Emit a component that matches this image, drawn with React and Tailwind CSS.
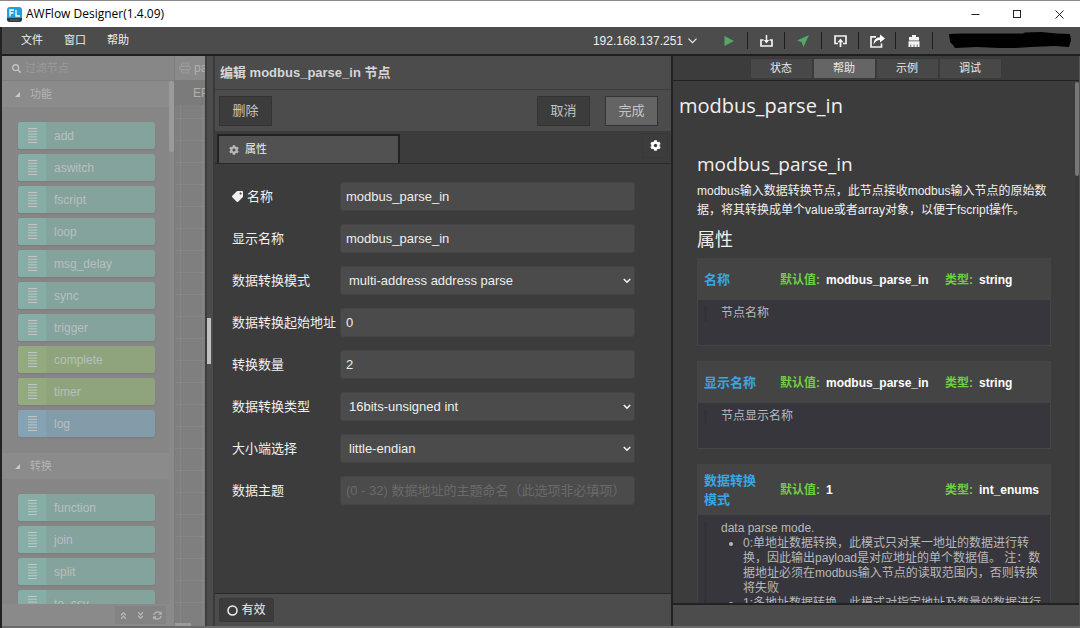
import React, { useState } from "react";
import { FaSearch, FaCog, FaTag, FaAngleDoubleUp, FaAngleDoubleDown, FaSyncAlt } from "react-icons/fa";

const NODE_COLORS = {
  teal: { body: "bg-[#84a39d]", icon: "bg-[#87ada7]" },
  green: { body: "bg-[#8fa37d]", icon: "bg-[#93aa7f]" },
  blue: { body: "bg-[#839caa]", icon: "bg-[#85a3b5]" },
};

const PALETTE = [
  {
    title: "功能",
    nodes: [
      ["add", "teal"],
      ["aswitch", "teal"],
      ["fscript", "teal"],
      ["loop", "teal"],
      ["msg_delay", "teal"],
      ["sync", "teal"],
      ["trigger", "teal"],
      ["complete", "green"],
      ["timer", "green"],
      ["log", "blue"],
    ],
  },
  {
    title: "转换",
    nodes: [
      ["function", "teal"],
      ["join", "teal"],
      ["split", "teal"],
      ["to_csv", "teal"],
    ],
  },
];

const FIELDS = [
  { id: "name", label: "名称", value: "modbus_parse_in", tag: true },
  { id: "display", label: "显示名称", value: "modbus_parse_in" },
  { id: "mode", label: "数据转换模式", options: ["multi-address address parse", "single-address parse"] },
  { id: "start", label: "数据转换起始地址", value: "0" },
  { id: "count", label: "转换数量", value: "2" },
  { id: "type", label: "数据转换类型", options: ["16bits-unsigned int", "16bits-int"] },
  { id: "endian", label: "大小端选择", options: ["little-endian", "big-endian"] },
  { id: "topic", label: "数据主题", value: "", placeholder: "(0 - 32) 数据地址的主题命名（此选项非必填项）" },
];

function TitleBar() {
  return (
    <header className="flex h-[27px] shrink-0 items-center border-t border-[#8a8a8a] bg-white pl-[7px] text-black">
      <svg width="15" height="15" viewBox="0 0 15 15" aria-hidden="true">
        <rect width="15" height="15" rx="3" fill="#1d9fe0" />
        <path d="M0 11h15v1a3 3 0 0 1-3 3H3a3 3 0 0 1-3-3z" fill="#2b3a44" />
        <path d="M3 9.500V3h4M3 6h3.500M9 3v6h4" fill="none" stroke="#fff" strokeWidth="1.300" />
        <path d="M3 13h9" stroke="#6d7f8a" strokeWidth="0.800" />
      </svg>
      <h1 className="ml-1 flex-1 font-['Open_Sans','Noto_Sans',sans-serif] text-[12px] leading-4">AWFlow Designer(1.4.09)</h1>
      <button aria-label="Minimize" className="flex w-[42px] justify-center">
        <svg width="9" height="9" viewBox="0 0 9 9"><path d="M0.500 4.500h8" stroke="#222" /></svg>
      </button>
      <button aria-label="Maximize" className="flex w-[42px] justify-center">
        <svg width="9" height="9" viewBox="0 0 9 9"><rect x="0.500" y="0.500" width="7" height="7" fill="none" stroke="#222" /></svg>
      </button>
      <button aria-label="Close" className="flex w-[42px] justify-center">
        <svg width="9" height="9" viewBox="0 0 9 9"><path d="M0.500 0.500l8 8M8.500 0.500l-8 8" stroke="#222" /></svg>
      </button>
    </header>
  );
}

function ToolButton({ label, children }) {
  return (
    <button aria-label={label} className="flex h-[17px] w-[37px] items-center justify-center border-r border-[#1f1f1f]">
      {children}
    </button>
  );
}

function MenuBar() {
  return (
    <nav className="flex h-[29px] shrink-0 items-center border-b-2 border-[#1f1f1f] bg-[#4c4c4c] pl-[19px] pr-[9px] text-[11px] text-[#eee]">
      <div className="flex flex-1 gap-[21px]">
        <button>文件</button>
        <button>窗口</button>
        <button>帮助</button>
      </div>
      <button className="mr-[14px] flex items-center gap-[5px] text-[12px]">
        192.168.137.251
        <svg width="9" height="6" viewBox="0 0 9 6"><path d="M0.500 0.700l4 4 4-4" fill="none" stroke="#eee" strokeWidth="1.200" /></svg>
      </button>
      <ToolButton label="Run">
        <svg width="10" height="10" viewBox="0 0 10 10"><path d="M0.500 0L10 5L0.500 10z" fill="#54a868" /></svg>
      </ToolButton>
      <ToolButton label="Download">
        <svg width="13" height="12" viewBox="0 0 13 12">
          <path d="M3.500 5H1v6h11V5H9.500" fill="none" stroke="#f2f2f2" strokeWidth="1.700" />
          <path d="M6.500 0v6" stroke="#f2f2f2" strokeWidth="1.500" />
          <path d="M3.800 5h5.400L6.500 8.400z" fill="#f2f2f2" />
        </svg>
      </ToolButton>
      <ToolButton label="Deploy">
        <svg width="12" height="12" viewBox="0 0 12 12"><path d="M12 0L0 5.600l4.600 1.500L6.500 12z" fill="#54a868" /></svg>
      </ToolButton>
      <ToolButton label="Upload">
        <svg width="13" height="12" viewBox="0 0 13 12">
          <path d="M4 8.500H1V1h11v7.500H9" fill="none" stroke="#f2f2f2" strokeWidth="1.700" />
          <path d="M6.500 12V6" stroke="#f2f2f2" strokeWidth="1.800" />
          <path d="M3.500 7.200h6L6.500 3.600z" fill="#f2f2f2" />
        </svg>
      </ToolButton>
      <ToolButton label="Share">
        <svg width="15" height="14" viewBox="0 0 15 14">
          <path d="M6 2.800H1V13h10.500V9.500" fill="none" stroke="#f2f2f2" strokeWidth="1.700" />
          <path d="M3.600 10.500C3.600 6 6 3.300 10 3.200V0.600L15 4.600l-5 4V6C7.500 6 5.200 7.200 3.600 10.500z" fill="#fff" />
        </svg>
      </ToolButton>
      <ToolButton label="Clear">
        <svg width="12" height="12" viewBox="0 0 12 12">
          <path d="M4 0h4v2h3v3.500H1V2h3z" fill="#f2f2f2" />
          <path d="M0.500 6.300h11V12H9.600V9.500h-.8V12H6.400V9.500h-.8V12H3.200V9.500h-.8V12H0.500z" fill="#f2f2f2" />
        </svg>
      </ToolButton>
      <svg className="ml-4" width="122" height="17" viewBox="0 0 122 17" aria-hidden="true">
        <path d="M0 2L12 1.500L74 1.500L76 0.500L92 0L108 1.500L121 2L122 8L120 15L106 14L82 15L66 16L50 16L28 15L6 16L4 13L1 10z" fill="#000" />
      </svg>
    </nav>
  );
}

function PaletteNode({ name, tone }) {
  const c = NODE_COLORS[tone];
  return (
    <li className={"flex h-[27px] overflow-hidden rounded-[3px] shadow-[0_1px_2px_rgba(0,0,0,0.08)] " + c.body}>
      <span className={"flex w-7 items-center justify-center " + c.icon}>
        <svg width="9" height="15" viewBox="0 0 9 15" aria-hidden="true">
          <path d="M0 0.500h9M0 3.300h9M0 6.100h9M0 8.900h9M0 11.700h9M0 14.500h9" stroke="#bfc6c4" strokeWidth="1" />
        </svg>
      </span>
      <span className="flex items-center pl-2 text-[12px] leading-4 text-[#b8c0be]">{name}</span>
    </li>
  );
}

function Palette() {
  return (
    <aside className="flex w-[173px] shrink-0 flex-col border-r border-[#7c7c7c] bg-[#868686]">
      <label className="flex h-[25px] shrink-0 items-center gap-[4px] border-b border-[#7f7f7f] bg-[#878787] pl-[10px] text-[#c4c4c4]">
        <FaSearch size={9} />
        <input
          aria-label="过滤节点"
          placeholder="过滤节点"
          className="min-w-0 flex-1 bg-transparent text-[11px] outline-none placeholder:text-[#9a9a9a]"
        />
      </label>
      <div className="flex min-h-0 flex-1 overflow-hidden">
        <div className="min-w-0 flex-1">
          {PALETTE.map((group) => (
            <section key={group.title}>
              <h2 className="flex h-[26px] items-center gap-[10px] bg-[#8b8b8b] pl-[13px] text-[11px] text-[#b4b4b4]">
                <svg width="5" height="5" viewBox="0 0 5 5"><path d="M5 0v5H0z" fill="#c8c8c8" /></svg>
                {group.title}
              </h2>
              <ul className="flex flex-col gap-[5px] pb-4 pl-4 pr-[14px] pt-[15px]">
                {group.nodes.map(([name, tone]) => (
                  <PaletteNode key={name} name={name} tone={tone} />
                ))}
              </ul>
            </section>
          ))}
        </div>
        <div className="w-[5px] bg-[#8a8a8a]">
          <div className="h-[71px] rounded-full bg-[#9b9b9b]" />
        </div>
      </div>
      <footer className="flex h-[22px] shrink-0 items-center justify-end bg-[#8a8a8a] pr-2 text-[#b4b4b4]">
        <button aria-label="全部折叠" className="flex h-[18px] w-[17px] items-center justify-center bg-[#838383]"><FaAngleDoubleUp size={9} /></button>
        <button aria-label="全部展开" className="flex h-[18px] w-[17px] items-center justify-center bg-[#838383]"><FaAngleDoubleDown size={9} /></button>
        <button aria-label="刷新" className="flex h-[18px] w-[17px] items-center justify-center bg-[#838383]"><FaSyncAlt size={9} /></button>
      </footer>
    </aside>
  );
}

function Workspace() {
  return (
    <section className="flex w-8 shrink-0 flex-col overflow-hidden border-r-2 border-[#3d3d3d] bg-[#7f7f7f] text-[#b0b0b0]">
      <div className="flex h-[25px] shrink-0 items-center gap-[3px] overflow-hidden border-b border-[#7a7a7a] bg-[#8a8a8a] pl-1 text-[12px]">
        <svg className="shrink-0" width="12" height="12" viewBox="0 0 12 12" fill="none" stroke="#9c9c9c" strokeWidth="1.200">
          <rect x="2.500" y="1" width="7" height="3" rx="1" />
          <rect x="0.700" y="4.500" width="10.600" height="3" rx="1" />
          <rect x="2.500" y="8" width="7" height="3" rx="1" />
        </svg>
        <span>parse</span>
      </div>
      <div className="h-[24px] shrink-0 overflow-hidden bg-[#7b7b7b] pl-[18px] text-[12px] leading-6">EP</div>
      <div className="flex-1 bg-[linear-gradient(#868686_1px,transparent_1px),linear-gradient(90deg,#868686_1px,transparent_1px)] bg-[length:22px_22px] bg-[position:5px_13px]" />
      <div className="mr-[14px] h-[3px] bg-[#9b9b9b]" />
    </section>
  );
}

function Field({ field }) {
  const box =
    "h-[29px] w-full rounded-[3px] border border-[#444] bg-[#4b4b4b] text-[13px] text-[#eee] outline-none placeholder:text-[#6a6a6a]";
  return (
    <div className="flex items-center">
      <label htmlFor={field.id} className="flex w-[108px] shrink-0 items-center gap-1 whitespace-nowrap text-[13px] leading-[18px] text-[#f0f0f0]">
        {field.tag && <FaTag size={11} className="-scale-x-100 rotate-0" style={undefined} />}
        {field.label}
      </label>
      {field.options ? (
        <div className="relative min-w-0 flex-1">
          <select id={field.id} className={box + " appearance-none pl-2 pr-6"}>
            {field.options.map((o) => (
              <option key={o}>{o}</option>
            ))}
          </select>
          <svg className="pointer-events-none absolute right-1 top-3" width="8" height="6" viewBox="0 0 8 6">
            <path d="M0.800 1l3.200 3.200L7.200 1" fill="none" stroke="#f4f4f4" strokeWidth="1.600" />
          </svg>
        </div>
      ) : (
        <input id={field.id} defaultValue={field.value} placeholder={field.placeholder} className={box + " min-w-0 flex-1 px-[5px]"} />
      )}
    </div>
  );
}

function Editor() {
  const btn = "flex h-[30px] w-[53px] items-center justify-center border border-[#333] text-[13px] text-[#c4c4c4]";
  return (
    <main className="flex min-w-0 flex-1 border-r-2 border-[#222] bg-[#3c3c3c]">
      <div className="flex w-2 shrink-0 items-center border-r-2 border-[#3a3a3a] bg-[#4c4c4c]">
        <div className="h-[46px] w-[4px] bg-[#c0c0c0]" />
      </div>
      <div className="flex min-w-0 flex-1 flex-col">
        <h2 className="flex h-[34px] shrink-0 items-center border-b border-[#3c3c3c] bg-[#4c4c4c] pl-[5px] text-[13px] font-bold text-[#d6d6d6]">
          编辑 modbus_parse_in 节点
        </h2>
        <div className="flex h-[41px] shrink-0 items-center bg-[#4c4c4c] pl-[4px] pr-[13px]">
          <button className={btn + " bg-[#3c3c3c]"}>删除</button>
          <div className="flex-1" />
          <button className={btn + " bg-[#3c3c3c]"}>取消</button>
          <button className={btn + " ml-[15px] bg-[#646464]"}>完成</button>
        </div>
        <div className="flex h-[33px] shrink-0 items-end border-b border-[#2a2a2a] pl-[2px] pr-[3px]">
          <button className="flex h-[29px] w-[183px] items-center gap-[6px] border-2 border-b-0 border-[#222] bg-[#515151] pl-[10px] text-[11px] text-[#eee]">
            <FaCog size={10} color="#b8b8b8" />
            属性
          </button>
          <div className="flex-1" />
          <button aria-label="设置" className="mb-[5px] flex h-[25px] w-[26px] items-center justify-center border border-[#393939] text-white">
            <FaCog size={11} />
          </button>
        </div>
        <form className="flex flex-1 flex-col gap-[13px] pl-[17px] pr-[36px] pt-[18px]">
          {FIELDS.map((f) => (
            <Field key={f.id} field={f} />
          ))}
        </form>
        <footer className="flex h-[33px] shrink-0 items-center border-t border-[#2a2a2a] bg-[#4c4c4c] pl-[4px]">
          <button className="flex h-6 w-[55px] items-center justify-center gap-[3px] rounded-[2px] border border-[#393939] bg-[#3c3c3c] text-[12px] text-[#f0f0f0]">
            <svg width="11" height="11" viewBox="0 0 11 11"><circle cx="5.500" cy="5.500" r="4.500" fill="none" stroke="#f0f0f0" strokeWidth="1.500" /></svg>
            有效
          </button>
        </footer>
      </div>
    </main>
  );
}

function PropertyCard({ name, value, type, tall, children }) {
  return (
    <section className="mb-[15px] shrink-0 border border-[#454545] bg-[#37363d]">
      <div className={"grid grid-cols-[76px_165px_1fr] items-center bg-[#444] pl-[6px] text-[12px] font-bold text-white " + (tall ? "h-[50px]" : "h-[41px]")}>
        <h4 className="w-[54px] text-[13px] leading-[19px] text-[#3aa6e4]">{name}</h4>
        <p><span className="mr-[6px] text-[#70cf42]">默认值:</span>{value}</p>
        <p><span className="mr-[6px] text-[#70cf42]">类型:</span>{type}</p>
      </div>
      <div className={"px-[6px] pt-[6px] " + (tall ? "" : "h-[45px]")}>
        <blockquote className="border-l-[3px] border-[#333237] pl-[14px] text-[12px] leading-[15px] text-[#b9b9b9]">{children}</blockquote>
      </div>
    </section>
  );
}

function HelpPanel() {
  const [active, setActive] = useState("帮助");
  return (
    <aside className="flex w-[407px] shrink-0 flex-col border-r border-[#555] bg-[#3c3c3c]">
      <div className="flex h-[25px] shrink-0 items-center justify-center border-b border-[#222] pr-px">
        {["状态", "帮助", "示例", "调试"].map((t) => (
          <button
            key={t}
            onClick={() => setActive(t)}
            className={"h-[21px] w-[63px] border border-[#3a3a3a] text-[11px] text-[#e8e8e8] " + (t === active ? "bg-[#656565]" : "bg-[#484848]")}
          >
            {t}
          </button>
        ))}
      </div>
      <div className="flex min-h-0 flex-1">
        <article className="flex min-w-0 flex-1 flex-col overflow-hidden pl-[6px] pr-[24px] text-[#f0f0f0]">
          <h2 className="mt-[11px] shrink-0 font-['Open_Sans','Noto_Sans',sans-serif] text-[20px] leading-7">modbus_parse_in</h2>
          <div className="flex flex-col pl-[18px] pt-[31px]">
            <h3 className="font-['Open_Sans','Noto_Sans',sans-serif] text-[19px] leading-[26px]">modbus_parse_in</h3>
            <p className="mt-[5px] text-[12px] leading-[19px]">
              modbus输入数据转换节点，此节点接收modbus输入节点的原始数据，将其转换成单个value或者array对象，以便于fscript操作。
            </p>
            <h3 className="mb-[6px] mt-[8px] text-[18px] leading-6">属性</h3>
            <PropertyCard name="名称" value="modbus_parse_in" type="string">节点名称</PropertyCard>
            <PropertyCard name="显示名称" value="modbus_parse_in" type="string">节点显示名称</PropertyCard>
            <PropertyCard name="数据转换模式" value="1" type="int_enums" tall>
              data parse mode.
              <ul className="list-disc pl-[22px]">
                <li>0:单地址数据转换，此模式只对某一地址的数据进行转换，因此输出payload是对应地址的单个数据值。 注：数据地址必须在modbus输入节点的读取范围内，否则转换将失败</li>
                <li>1:多地址数据转换，此模式对指定地址及数量的数据进行转换</li>
              </ul>
            </PropertyCard>
          </div>
        </article>
        <div className="w-[4px] bg-[#393939] pt-px">
          <div className="h-[94px] rounded-full bg-[#777]" />
        </div>
      </div>
      <footer className="h-[23px] shrink-0 border-t-2 border-[#222] bg-[#4c4c4c]" />
    </aside>
  );
}

export default function App() {
  return (
    <div className="flex h-screen flex-col overflow-hidden bg-[#6a6a6a] font-['Liberation_Sans','Noto_Sans_CJK_SC',sans-serif]">
      <TitleBar />
      <div className="flex min-h-0 flex-1 flex-col border-l-2 border-[#222] pb-[2px]">
        <MenuBar />
        <div className="flex min-h-0 flex-1">
          <Palette />
          <Workspace />
          <Editor />
          <HelpPanel />
        </div>
      </div>
    </div>
  );
}
